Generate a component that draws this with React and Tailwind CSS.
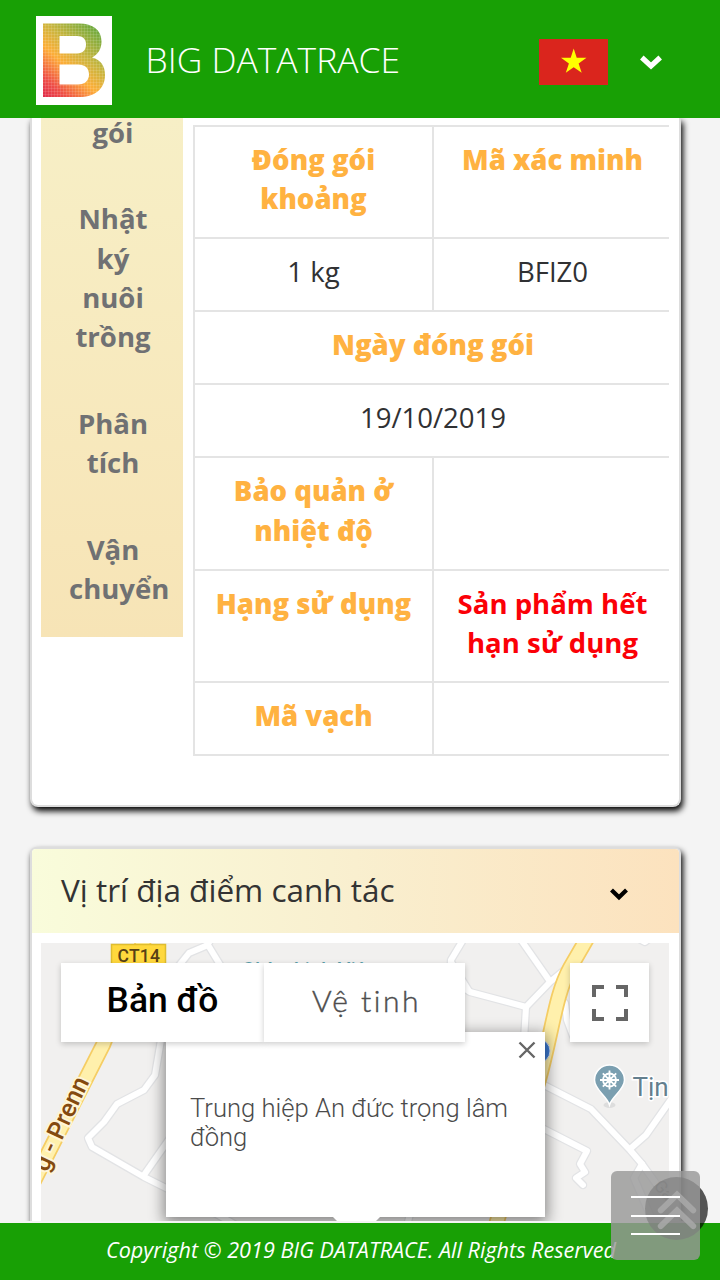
import React from "react";

const BODY = "text-[27.56px] leading-[39.375px]";
const LETTER =
  "M7 7.500H43C57 7.500 65.500 14 65.500 25.500C65.500 33 62 38.500 56 41.500C65 44 69 50 69 59C69 73 59 81 43 81H7ZM23.500 20V37.500H41C47 37.500 50 34 50 28.500C50 23 47 20 41 20ZM23.500 48.500V68.500H42C49 68.500 53 64.500 53 58.500C53 52 49 48.500 42 48.500Z";

function Header() {
  return (
    <header className="relative z-20 flex h-[118px] shrink-0 items-center bg-[#18a005] pl-9">
      <div className="mt-0.5 h-[89px] w-[76px] bg-white">
        <svg viewBox="0 0 76 89" className="h-full w-full">
          <defs>
            <linearGradient id="logoFill" x1="0" y1="1" x2="0.75" y2="0">
              <stop offset="0" stopColor="#e02c4c" />
              <stop offset="0.18" stopColor="#ee4e47" />
              <stop offset="0.45" stopColor="#fdae38" />
              <stop offset="0.68" stopColor="#c9b53e" />
              <stop offset="1" stopColor="#70aa3e" />
            </linearGradient>
            <pattern id="logoGrid" width="3" height="3" patternUnits="userSpaceOnUse">
              <path d="M0 .5H3M.5 0V3" stroke="#fff" strokeOpacity=".2" strokeWidth=".6" />
            </pattern>
          </defs>
          <g fillRule="evenodd">
            <path fill="url(#logoFill)" d={LETTER} />
            <path fill="url(#logoGrid)" d={LETTER} />
          </g>
        </svg>
      </div>
      <h1 className="mt-0.5 ml-[33.5px] w-[392.5px] text-[35.44px] leading-none font-light whitespace-nowrap text-white">BIG DATATRACE</h1>
      <svg viewBox="0 0 69 46" className="mt-1.5 ml-[.5px] h-[46px] w-[69px]">
        <path fill="#da251d" d="M0 0H69V46H0Z" />
        <path fill="#ff0" d="M34.700 9.500L37.700 18.700H47.500L39.600 24.500L42.700 33.800L34.700 28.200L26.800 33.800L29.900 24.500L22 18.700H31.700Z" />
      </svg>
      <svg viewBox="0 0 22 15" className="mt-1.5 ml-[32px] h-[15px] w-[22px]">
        <path fill="none" stroke="#fff" strokeWidth="5.200" d="M1.800 2.500L11 11L20.200 2.500" />
      </svg>
    </header>
  );
}

function Sidebar() {
  const items = [["gói"], ["Nhật", "ký", "nuôi", "trồng"], ["Phân", "tích"], ["Vận", "chuyển"]];
  return (
    <nav className="flex h-[519px] w-[142px] flex-col justify-end overflow-hidden bg-linear-to-b from-[#f7efc6] to-[#f7e4b6] pb-[4.7px] text-[#707173]">
      {items.map((lines) => (
        <a key={lines[0]} className={`${BODY} ml-7 flex w-[88px] shrink-0 flex-col py-[23.6px] text-center font-bold`}>
          {lines.map((line) => (
            <span key={line}>{line}</span>
          ))}
        </a>
      ))}
    </nav>
  );
}

function Cell({ label, tone = "label", wide, last }) {
  const tones = {
    label: "font-extrabold text-[#ffb241]",
    value: "text-[#303133]",
    alert: "font-bold text-[#fb0007]",
  };
  return (
    <td colSpan={wide ? 2 : 1} className={`border-t-2 border-l-2 border-[#e4e4e4] pt-[13px] pb-[18.6px] text-center align-top whitespace-pre-line ${last ? "pr-2.5 pl-3" : "px-3"} ${tones[tone]}`}>
      {label}
    </td>
  );
}

function Details() {
  return (
    <table className={`${BODY} mt-[7px] w-[476px] table-fixed border-separate border-spacing-0 border-b-2 border-[#e4e4e4]`}>
      <colgroup>
        <col className="w-[239px]" />
        <col />
      </colgroup>
      <tbody>
        <tr><Cell label={"Đóng gói\nkhoảng"} /><Cell last label="Mã xác minh" /></tr>
        <tr><Cell tone="value" label="1 kg" /><Cell last tone="value" label="BFIZ0" /></tr>
        <tr><Cell wide last label="Ngày đóng gói" /></tr>
        <tr><Cell wide last tone="value" label="19/10/2019" /></tr>
        <tr><Cell label={"Bảo quản ở\nnhiệt độ"} /><Cell last label="" /></tr>
        <tr><Cell label="Hạng sử dụng" /><Cell last tone="alert" label={"Sản phẩm hết\nhạn sử dụng"} /></tr>
        <tr><Cell label="Mã vạch" /><Cell last label="" /></tr>
      </tbody>
    </table>
  );
}

const roads = [
  "M177 968L189 953L208 945L222 968",
  "M207 945L212 938",
  "M463 940L451 960V980L470 992L526 1007L550 982L568 967",
  "M451 962L469 991",
  "M521 940L549 980",
  "M526 1007L524 1040",
  "M565 1003L567 1020L573 1036",
  "M161 1040L155 1075L144 1090L117 1104L104 1122L88 1138L92 1147L144 1177L170 1190",
  "M144 1175L170 1138",
  "M540 1083L591 1109L630 1150L642 1164L668 1200",
  "M630 1149L646 1135L672 1098",
  "M642 1164L634 1178L650 1215",
  "M540 1127L587 1151L580 1164L585 1172L576 1178L583 1185",
  "M200 1205L245 1230",
  "M406 1230L411 1210",
  "M641 940L645 942L650 938",
];

function RoadMap() {
  return (
    <svg viewBox="41 943 628 278" className="h-[278px] w-[628px]">
      <path fill="#f1f0ef" d="M41 943H669V1221H41Z" />
      <g fill="none" strokeLinejoin="round" strokeLinecap="round">
        {roads.map((d) => <path key={d} d={d} stroke="#e2e3e5" strokeWidth="8.500" />)}
        {roads.map((d) => <path key={d} d={d} stroke="#fff" strokeWidth="6" />)}
        <g strokeLinecap="butt">
          <path stroke="#f5cd64" strokeWidth="16" d="M148 930L103 1045L34 1181M592 930L570 968C555 995 552 1035 538 1083L496 1225" />
          <path stroke="#fff0ac" strokeWidth="12.500" d="M148 930L103 1045L34 1181M592 930L570 968C555 995 552 1035 538 1083L496 1225" />
        </g>
      </g>
      <path fill="#ffd83d" stroke="#dfbd2f" strokeWidth="1.500" d="M111.500 944.500H165.500V970H111.500Z" />
      <text x="117.500" y="962" fontSize="17.500" fontWeight="500" letterSpacing=".2" className="fill-[#574015] font-[Roboto]">CT14</text>
      <text x="242" y="976.500" fontSize="19.500" fontWeight="500" letterSpacing=".4" className="fill-[#5b9faa] font-[Roboto]">Chùa Linh Viên</text>
      <text transform="translate(47 1173) rotate(-65)" fontSize="25" fontWeight="500" stroke="#fff5d6" strokeWidth="4" paintOrder="stroke" className="fill-[#844a0f] font-[Roboto]">g - Prenn</text>
      <circle cx="538" cy="1051" r="12" fill="#3e7dd8" stroke="#d4e1f4" />
      <ellipse cx="609.500" cy="1105" rx="6" ry="3" fill="#ddd" />
      <path fill="#7b9fb0" stroke="#fff" strokeWidth="1.500" d="M609.500 1105C607 1096 594.500 1090 594.500 1080A15 15 0 0 1 624.500 1080C624.500 1090 612 1096 609.500 1105Z" />
      <g fill="none" stroke="#fff" strokeWidth="1.800">
        <circle cx="609.500" cy="1080" r="6.500" />
        <circle cx="609.500" cy="1080" r="2" />
        <path d="M609.500 1070.500V1089.500M600 1080H619M602.800 1073.300L616.200 1086.700M616.200 1073.300L602.800 1086.700" />
      </g>
      <text x="632.500" y="1096" fontSize="26" stroke="#fff" strokeWidth="3" paintOrder="stroke" className="fill-[#647f8e] font-[Roboto]">Tịn</text>
      <text transform="translate(653 1186) rotate(50)" fontSize="17" className="fill-[#77787a] font-[Roboto]">Ga</text>
    </svg>
  );
}

function MapPanel() {
  return (
    <div className="relative mt-2.5 ml-[9px] h-[278px] w-[628px] overflow-hidden font-[Roboto]">
      <RoadMap />
      <div className="absolute top-[89px] left-[125px] h-[185px] w-[379px] bg-white shadow-[0_4px_14px_2px_rgba(0,0,0,0.45)]">
        <p className="mt-[62px] ml-6 text-[25.6px] leading-[29px] font-light whitespace-nowrap text-[#4b4b4b]">
          Trung hiệp An đức trọng lâm
          <br />
          đồng
        </p>
        <svg viewBox="0 0 18 18" className="absolute top-[9px] right-[9px] h-[18px] w-[18px]">
          <path stroke="#666" strokeWidth="2.400" d="M1.500 1.500L16.500 16.500M16.500 1.500L1.500 16.500" />
        </svg>
      </div>
      <svg viewBox="0 0 240 4" className="absolute bottom-0 left-[177px] h-[4px] w-[240px]">
        <path fill="#fff" d="M115 0H162L158 4H119Z" />
      </svg>
      <div className="absolute top-5 left-5 flex h-[79px] text-center leading-[74px]">
        <div className="w-[203px] bg-white text-[35.4px] font-medium text-black shadow-[0_2px_6px_rgba(0,0,0,0.2)]">Bản đồ</div>
        <div className="w-[201px] bg-white pl-1 font-[Lato] text-[30px] font-light tracking-[2.5px] text-[#4d4d4d] shadow-[0_2px_6px_rgba(0,0,0,0.2)] [-webkit-text-stroke:0.4px_#4d4d4d]">Vệ tinh</div>
      </div>
      <div className="absolute top-5 left-[529px] flex h-[79px] w-[79px] items-center justify-center bg-white shadow-[0_2px_6px_rgba(0,0,0,0.2)]">
        <svg viewBox="0 0 36 36" className="h-9 w-9">
          <path fill="none" stroke="#666" strokeWidth="4" d="M2 12V2H12M24 2H34V12M34 24V34H24M12 34H2V24" />
        </svg>
      </div>
    </div>
  );
}

export default function App() {
  return (
    <div className="relative flex h-[1280px] w-[720px] flex-col overflow-hidden bg-[#f4f4f4] font-['Open_Sans',sans-serif]">
      <Header />
      <main className="flex h-[1103px] shrink-0 flex-col gap-10 overflow-hidden px-[30px]">
        <section className="flex h-[689px] w-[651px] shrink-0 items-start gap-2.5 rounded-b-[8px] border-2 border-t-0 border-[#ddd] bg-white pl-[9px] shadow-[2px_4px_6px_0_#000]">
          <Sidebar />
          <Details />
        </section>
        <section className="h-[420px] w-[651px] shrink-0 rounded-[6px] border-2 border-[#ddd] bg-white shadow-[2px_4px_6px_0_#000]">
          <div className="flex h-[84px] items-center justify-between rounded-t-[4px] bg-linear-to-r from-[#f9fcdb] via-[#f9efcf] to-[#fce2be] pr-[51px] pb-0.5 pl-[29px]">
            <h2 className="text-[31.5px] leading-none text-[#333]">Vị trí địa điểm canh tác</h2>
            <svg viewBox="0 0 18 13" className="mt-[8px] h-[13px] w-[18px]">
              <path fill="none" stroke="#000" strokeWidth="4.200" d="M1.500 2L9 9.300L16.500 2" />
            </svg>
          </div>
          <MapPanel />
        </section>
      </main>
      <footer className="mt-[2px] flex h-[57px] shrink-0 items-center bg-[#18a005] pb-1 pl-[106px] text-[21.600px] leading-none whitespace-nowrap text-white italic">
        Copyright © 2019 BIG DATATRACE. All Rights Reserved
      </footer>
      <div className="absolute top-[1177px] left-[645px] h-[63px] w-[63px] rounded-full bg-black/65">
        <svg viewBox="0 0 64 64" className="h-full w-full">
          <path fill="none" stroke="#fff" strokeWidth="6" strokeOpacity=".8" strokeLinecap="round" d="M16 34L32.500 18L49 34M16 50L32.500 34L49 50" />
        </svg>
      </div>
      <button className="absolute top-[1171px] left-[611px] flex h-[89px] w-[89px] flex-col items-center justify-center gap-[16.500px] rounded-[6px] bg-[#999]/82" aria-label="Menu">
        <span className="h-[2px] w-[49px] bg-white" />
        <span className="h-[2px] w-[49px] bg-white" />
        <span className="h-[2px] w-[49px] bg-white" />
      </button>
    </div>
  );
}
